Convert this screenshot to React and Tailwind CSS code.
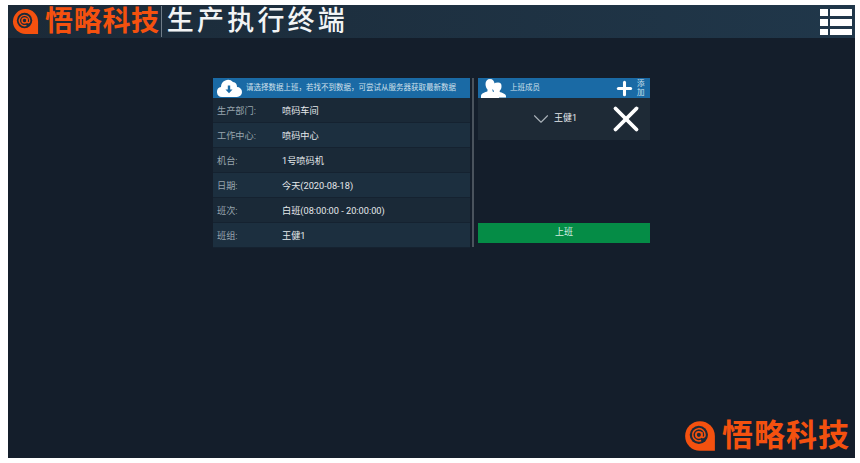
import { Plus, X, ChevronDown } from "lucide-react";

const CJK = "font-['Roboto','Noto_Sans_CJK_SC',sans-serif]";

const ROWS = [
  { label: "生产部门:", value: "喷码车间", bg: "bg-[#1a2937]" },
  { label: "工作中心:", value: "喷码中心", bg: "bg-[#1c2f3f]" },
  { label: "机台:", value: "1号喷码机", bg: "bg-[#1a2937]" },
  { label: "日期:", value: "今天(2020-08-18)", bg: "bg-[#1c2f3f]" },
  { label: "班次:", value: "白班(08:00:00 - 20:00:00)", bg: "bg-[#1a2937]" },
  { label: "班组:", value: "王健1", bg: "bg-[#1c2f3f]" },
];

// orange "@" snail mark
function LogoMark({ size }) {
  return (
    <svg width={size} height={size} viewBox="0 0 28 28" className="shrink-0">
      <path d="M14 1a13 13 0 0 0 0 26h13V14A13 13 0 0 0 14 1z" fill="#f4510f" />
      <circle cx="13" cy="13" r="8" fill="#1b2a38" />
      <circle cx="13" cy="13" r="2.6" fill="none" stroke="#f4510f" strokeWidth="1.6" />
      <path d="M15.6 10.5v3.6c0 1.8 2.8 1.8 2.8-1A5.4 5.4 0 1 0 15 18" fill="none" stroke="#f4510f" strokeWidth="1.4" />
    </svg>
  );
}

function CloudIcon() {
  return (
    <svg width="26" height="18" viewBox="0 0 26 18" className="shrink-0">
      <path d="M6 18a5 5 0 0 1-1-9.900A7 7 0 0 1 17 3a5 5 0 0 1 4 5 5 5 0 0 1 0 10z" fill="#fff" />
      <path d="M11.800 6.500h2.400v4h2.300L13 14.200l-3.500-3.700h2.300z" fill="#1a6aa5" />
    </svg>
  );
}

function UsersIcon() {
  return (
    <svg width="25" height="19" viewBox="0 0 25 19" className="shrink-0">
      <path d="M17 3.500a3.700 3.700 0 0 1 3.500 4c0 2-.8 3.500-1.800 4.300v1.200c2 .8 6.300 1.600 6.300 4v1.500h-7c0-3-3-4-5-5v-1.500c-1-1-1.500-2.500-1.500-4.500 0-2.400 2-4 5.500-4z" fill="#fff" />
      <path d="M9 0c2.800 0 4.500 2 4.500 5 0 2.500-.9 4.500-2 5.500v1.800c2.300 1 6.500 2 6.500 4.700v2H0v-2c0-2.700 4.200-3.700 6.500-4.700v-1.800c-1.100-1-2-3-2-5.500 0-3 1.700-5 4.500-5z" fill="#fff" />
    </svg>
  );
}

export default function App() {
  return (
    <div className={`h-[463px] bg-white pt-[5px] pl-[8px] pr-[5px] pb-[5px] ${CJK}`}>
      <div className="h-full flex flex-col bg-[#141e2b]">
        {/* Header */}
        <header className="h-[33px] shrink-0 flex items-center bg-gradient-to-r from-[#1b2a38] to-[#20374a]">
          <div className="ml-[4px]">
            <LogoMark size={27} />
          </div>
          <span className="ml-[6px] text-[28px] leading-[33px] font-bold text-[#f4510f] tracking-[0.7px] whitespace-nowrap">悟略科技</span>
          <span className="ml-[1px] w-px h-[31px] bg-[#6f7c88]" />
          <span className="ml-[5px] text-[27px] leading-[33px] font-medium text-[#f2f4f5] tracking-[3.2px] whitespace-nowrap">生产执行终端</span>
          <div className="ml-auto mr-[3px] grid grid-cols-[8px_22px] gap-x-[2px] gap-y-[3px]">
            <span className="h-[7px] bg-white" />
            <span className="h-[7px] bg-white" />
            <span className="h-[7px] bg-white" />
            <span className="h-[7px] bg-white" />
            <span className="h-[6px] bg-white" />
            <span className="h-[6px] bg-white" />
          </div>
        </header>

        {/* Main */}
        <main className="flex items-start pt-[40px] pl-[205px]">
          {/* Data panel */}
          <section className="w-[257px]">
            <div className="h-[20px] flex items-center bg-[#1a6aa5] pl-[3px]">
              <CloudIcon />
              <span className="ml-[4px] text-[7.5px] text-[#cfe0ec] whitespace-nowrap">请选择数据上班，若找不到数据，可尝试从服务器获取最新数据</span>
            </div>
            {ROWS.map((row) => (
              <div key={row.label} className={`h-[25px] flex items-center pt-[2px] border-b border-[#152230] text-[9.2px] ${row.bg}`}>
                <span className="w-[69px] pl-[4px] text-[#98a5ae] whitespace-nowrap">{row.label}</span>
                <span className="text-[#e4e8eb] whitespace-nowrap">{row.value}</span>
              </div>
            ))}
          </section>

          <div className="ml-[2px] w-[2px] h-[169px] bg-[#4a535d]" />

          {/* Members panel */}
          <section className="ml-[4px] w-[172px] flex flex-col h-[165px]">
            <div className="h-[20px] flex items-center bg-[#1a6aa5] pl-[3px]">
              <UsersIcon />
              <span className="ml-[4px] text-[7.5px] text-[#cfe0ec] whitespace-nowrap">上班成员</span>
              <Plus size={21} strokeWidth={3.5} className="ml-auto text-white" />
              <span className="w-[8px] ml-[2px] mr-[5px] text-[7.5px] leading-[9px] text-[#cfe0ec]">添加</span>
            </div>
            <div className="h-[42px] flex items-center bg-[#1e2a36]">
              <ChevronDown size={26} strokeWidth={1} className="ml-[50px] text-[#aab2b9]" />
              <span className="text-[9px] text-[#e4e8eb]">王健1</span>
              <X size={42} strokeWidth={2.2} className="ml-auto mr-[3px] text-white" />
            </div>
            <button className="mt-auto h-[20px] bg-[#058c46] text-[9px] text-[#d5efe1]">上班</button>
          </section>
        </main>

        {/* Watermark */}
        <footer className="mt-auto mb-[3px] mr-[5px] flex items-center justify-end">
          <LogoMark size={32} />
          <span className="ml-[6px] text-[31px] leading-[38px] font-bold text-[#f4510f] tracking-[1px] whitespace-nowrap">悟略科技</span>
        </footer>
      </div>
    </div>
  );
}
